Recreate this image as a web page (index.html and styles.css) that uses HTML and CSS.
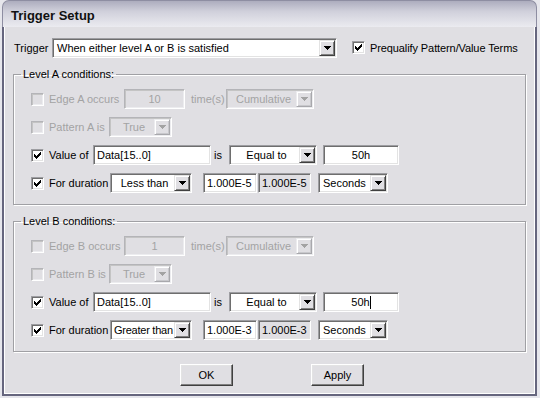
FILE: index.html
```html
<!DOCTYPE html>
<html>
<head>
<meta charset="utf-8">
<title>Trigger Setup</title>
<link rel="stylesheet" href="styles.css">
</head>
<body>
<div class="window">
  <div class="titlebar">Trigger Setup</div>
  <div class="frame">
    <div class="trigger-row">
      <span class="lbl lbl-trigger">Trigger</span>
      <div class="select sel-trigger"><span class="val left">When either level A or B is satisfied</span><span class="arrow"><svg width="7" height="4" viewBox="0 0 7 4" shape-rendering="crispEdges"><rect x="0" y="0" width="7" height="1"/><rect x="1" y="1" width="5" height="1"/><rect x="2" y="2" width="3" height="1"/><rect x="3" y="3" width="1" height="1"/></svg></span></div>
      <span class="check checked pq"><svg width="7" height="7" viewBox="0 0 7 7" shape-rendering="crispEdges"><rect x="0" y="2" width="1" height="3"/><rect x="1" y="3" width="1" height="3"/><rect x="2" y="4" width="1" height="3"/><rect x="3" y="3" width="1" height="3"/><rect x="4" y="2" width="1" height="3"/><rect x="5" y="1" width="1" height="3"/><rect x="6" y="0" width="1" height="3"/></svg></span>
      <span class="lbl pq-label">Prequalify Pattern/Value Terms</span>
    </div>

    <fieldset class="group">
      <legend>Level A conditions:</legend>
      <div class="row off">
        <span class="check"></span>
        <span class="lbl w-edge">Edge A occurs</span>
        <span class="field w-count center">10</span>
        <span class="lbl w-times">time(s)</span>
        <div class="select w-cumul"><span class="val center">Cumulative</span><span class="arrow"><svg width="7" height="4" viewBox="0 0 7 4" shape-rendering="crispEdges"><rect x="0" y="0" width="7" height="1"/><rect x="1" y="1" width="5" height="1"/><rect x="2" y="2" width="3" height="1"/><rect x="3" y="3" width="1" height="1"/></svg></span></div>
      </div>
      <div class="row off">
        <span class="check"></span>
        <span class="lbl w-pattern">Pattern A is</span>
        <div class="select w-true"><span class="val center">True</span><span class="arrow"><svg width="7" height="4" viewBox="0 0 7 4" shape-rendering="crispEdges"><rect x="0" y="0" width="7" height="1"/><rect x="1" y="1" width="5" height="1"/><rect x="2" y="2" width="3" height="1"/><rect x="3" y="3" width="1" height="1"/></svg></span></div>
      </div>
      <div class="row">
        <span class="check checked"><svg width="7" height="7" viewBox="0 0 7 7" shape-rendering="crispEdges"><rect x="0" y="2" width="1" height="3"/><rect x="1" y="3" width="1" height="3"/><rect x="2" y="4" width="1" height="3"/><rect x="3" y="3" width="1" height="3"/><rect x="4" y="2" width="1" height="3"/><rect x="5" y="1" width="1" height="3"/><rect x="6" y="0" width="1" height="3"/></svg></span>
        <span class="lbl w-value">Value of</span>
        <span class="field w-data">Data[15..0]</span>
        <span class="lbl w-is">is</span>
        <div class="select w-equal"><span class="val center">Equal to</span><span class="arrow"><svg width="7" height="4" viewBox="0 0 7 4" shape-rendering="crispEdges"><rect x="0" y="0" width="7" height="1"/><rect x="1" y="1" width="5" height="1"/><rect x="2" y="2" width="3" height="1"/><rect x="3" y="3" width="1" height="1"/></svg></span></div>
        <span class="field w-hex center">50h</span>
      </div>
      <div class="row">
        <span class="check checked"><svg width="7" height="7" viewBox="0 0 7 7" shape-rendering="crispEdges"><rect x="0" y="2" width="1" height="3"/><rect x="1" y="3" width="1" height="3"/><rect x="2" y="4" width="1" height="3"/><rect x="3" y="3" width="1" height="3"/><rect x="4" y="2" width="1" height="3"/><rect x="5" y="1" width="1" height="3"/><rect x="6" y="0" width="1" height="3"/></svg></span>
        <span class="lbl w-dur">For duration</span>
        <div class="select w-cmp"><span class="val center">Less than</span><span class="arrow"><svg width="7" height="4" viewBox="0 0 7 4" shape-rendering="crispEdges"><rect x="0" y="0" width="7" height="1"/><rect x="1" y="1" width="5" height="1"/><rect x="2" y="2" width="3" height="1"/><rect x="3" y="3" width="1" height="1"/></svg></span></div>
        <span class="field w-time">1.000E-5</span>
        <span class="field w-time2 ro">1.000E-5</span>
        <div class="select w-unit"><span class="val left">Seconds</span><span class="arrow"><svg width="7" height="4" viewBox="0 0 7 4" shape-rendering="crispEdges"><rect x="0" y="0" width="7" height="1"/><rect x="1" y="1" width="5" height="1"/><rect x="2" y="2" width="3" height="1"/><rect x="3" y="3" width="1" height="1"/></svg></span></div>
      </div>
    </fieldset>

    <fieldset class="group group-b">
      <legend>Level B conditions:</legend>
      <div class="row off">
        <span class="check"></span>
        <span class="lbl w-edge">Edge B occurs</span>
        <span class="field w-count center">1</span>
        <span class="lbl w-times">time(s)</span>
        <div class="select w-cumul"><span class="val center">Cumulative</span><span class="arrow"><svg width="7" height="4" viewBox="0 0 7 4" shape-rendering="crispEdges"><rect x="0" y="0" width="7" height="1"/><rect x="1" y="1" width="5" height="1"/><rect x="2" y="2" width="3" height="1"/><rect x="3" y="3" width="1" height="1"/></svg></span></div>
      </div>
      <div class="row off">
        <span class="check"></span>
        <span class="lbl w-pattern">Pattern B is</span>
        <div class="select w-true"><span class="val center">True</span><span class="arrow"><svg width="7" height="4" viewBox="0 0 7 4" shape-rendering="crispEdges"><rect x="0" y="0" width="7" height="1"/><rect x="1" y="1" width="5" height="1"/><rect x="2" y="2" width="3" height="1"/><rect x="3" y="3" width="1" height="1"/></svg></span></div>
      </div>
      <div class="row">
        <span class="check checked"><svg width="7" height="7" viewBox="0 0 7 7" shape-rendering="crispEdges"><rect x="0" y="2" width="1" height="3"/><rect x="1" y="3" width="1" height="3"/><rect x="2" y="4" width="1" height="3"/><rect x="3" y="3" width="1" height="3"/><rect x="4" y="2" width="1" height="3"/><rect x="5" y="1" width="1" height="3"/><rect x="6" y="0" width="1" height="3"/></svg></span>
        <span class="lbl w-value">Value of</span>
        <span class="field w-data">Data[15..0]</span>
        <span class="lbl w-is">is</span>
        <div class="select w-equal"><span class="val center">Equal to</span><span class="arrow"><svg width="7" height="4" viewBox="0 0 7 4" shape-rendering="crispEdges"><rect x="0" y="0" width="7" height="1"/><rect x="1" y="1" width="5" height="1"/><rect x="2" y="2" width="3" height="1"/><rect x="3" y="3" width="1" height="1"/></svg></span></div>
        <span class="field w-hex center">50h<span class="caret"></span></span>
      </div>
      <div class="row">
        <span class="check checked"><svg width="7" height="7" viewBox="0 0 7 7" shape-rendering="crispEdges"><rect x="0" y="2" width="1" height="3"/><rect x="1" y="3" width="1" height="3"/><rect x="2" y="4" width="1" height="3"/><rect x="3" y="3" width="1" height="3"/><rect x="4" y="2" width="1" height="3"/><rect x="5" y="1" width="1" height="3"/><rect x="6" y="0" width="1" height="3"/></svg></span>
        <span class="lbl w-dur">For duration</span>
        <div class="select w-cmp"><span class="val left tight">Greater than</span><span class="arrow"><svg width="7" height="4" viewBox="0 0 7 4" shape-rendering="crispEdges"><rect x="0" y="0" width="7" height="1"/><rect x="1" y="1" width="5" height="1"/><rect x="2" y="2" width="3" height="1"/><rect x="3" y="3" width="1" height="1"/></svg></span></div>
        <span class="field w-time">1.000E-3</span>
        <span class="field w-time2 ro">1.000E-3</span>
        <div class="select w-unit"><span class="val left">Seconds</span><span class="arrow"><svg width="7" height="4" viewBox="0 0 7 4" shape-rendering="crispEdges"><rect x="0" y="0" width="7" height="1"/><rect x="1" y="1" width="5" height="1"/><rect x="2" y="2" width="3" height="1"/><rect x="3" y="3" width="1" height="1"/></svg></span></div>
      </div>
    </fieldset>

    <div class="buttons">
      <button class="btn">OK</button>
      <button class="btn">Apply</button>
    </div>
  </div>
</div>
</body>
</html>
```
FILE: styles.css
```css
html, body {
  margin: 0;
  padding: 0;
}
body {
  background: #e6e6ec;
  font-family: "Liberation Sans", Arial, sans-serif;
  font-size: 11px;
  color: #000;
}
.window {
  margin-left: 2px;
  width: 535px;
  height: 396px;
  display: flex;
  flex-direction: column;
}
.titlebar {
  height: 27px;
  box-sizing: border-box;
  border: 1px solid #8e8ea2;
  border-bottom: none;
  border-radius: 7px 7px 0 0;
  background: linear-gradient(#adadbe, #d0d0db 40%, #ebebf0);
  padding-left: 8px;
  font-weight: bold;
  font-size: 13px;
  line-height: 29px;
  color: #111;
}
.frame {
  flex: 1;
  background: #e0dfe3;
  border: 2px solid #66667e;
  border-top: none;
  box-shadow: inset 1px 0 #fff, inset -1px -1px #fff;
  padding: 10px 9px 0 9px;
}
.trigger-row {
  display: flex;
  align-items: center;
  height: 21px;
  padding-left: 1px;
}
.lbl {
  white-space: nowrap;
  flex: none;
}
.lbl-trigger { width: 38px; }
.sel-trigger { width: 285px; height: 21px; }
.pq { margin-left: 15px; }
.pq-label { margin-left: 5px; letter-spacing: -0.1px; }

.group {
  margin: 10px 0 0 0;
  padding: 8px 10px 11px 7px;
  border: 1px solid #a0a0a4;
  box-shadow: 1px 1px 0 #fff, inset 1px 1px 0 #fff;
  min-width: 0;
}
.group legend {
  padding: 0 2px;
  line-height: 13px;
}
.row {
  display: flex;
  align-items: center;
  height: 20px;
  padding-left: 10px;
}
.row + .row { margin-top: 8px; }
.row .check + .lbl { margin-left: 5px; }
.row.off .lbl { color: #a3a3a3; }

.w-edge { width: 75px; }
.w-pattern { width: 60px; }
.w-value { width: 44px; }
.w-dur { width: 61px; }
.w-times { margin-left: 6px; width: 35px; }
.w-is { margin-left: 3px; width: 15px; }

.check {
  flex: none;
  width: 13px;
  height: 13px;
  box-sizing: border-box;
  background: #fff;
  border: 1px solid;
  border-color: #9d9da1 #fff #fff #9d9da1;
  box-shadow: inset 1px 1px #6e6e6e, inset -1px -1px #e3e3e3;
  display: flex;
  align-items: center;
  justify-content: center;
}
.check svg { display: block; fill: #000; }
.row.off .check {
  background: #e0dfe3;
  border-color: #b4b4b8 #fff #fff #b4b4b8;
  box-shadow: inset 1px 1px #c4c4c4, inset -1px -1px #ececef;
}

.field {
  flex: none;
  box-sizing: border-box;
  height: 20px;
  background: #fff;
  border: 1px solid;
  border-color: #9d9da1 #fff #fff #9d9da1;
  box-shadow: inset 1px 1px #6e6e6e, inset -1px -1px #e3e3e3;
  padding: 0 3px;
  line-height: 18px;
  white-space: nowrap;
  overflow: hidden;
}
.field.center { text-align: center; }
.field.ro { background: #e0dfe3; }
.row.off .field {
  background: #e0dfe3;
  color: #a3a3a3;
  border-color: #b4b4b8 #fff #fff #b4b4b8;
  box-shadow: inset 1px 1px #c4c4c4, inset -1px -1px #ececef;
}
.caret {
  display: inline-block;
  width: 1px;
  height: 13px;
  background: #000;
  vertical-align: -3px;
}

.select {
  flex: none;
  display: flex;
  box-sizing: border-box;
  height: 20px;
  background: #fff;
  border: 1px solid;
  border-color: #9d9da1 #fff #fff #9d9da1;
  box-shadow: inset 1px 1px #6e6e6e, inset -1px -1px #e3e3e3;
  padding: 1px;
}
.select .val {
  flex: 1;
  min-width: 0;
  white-space: nowrap;
  overflow: hidden;
  line-height: 16px;
  padding-left: 3px;
}
.select .val.tight {
  padding-left: 2px;
  letter-spacing: -0.25px;
}
.sel-trigger .val { line-height: 17px; }
.select .val.center { text-align: center; }
.arrow {
  flex: none;
  width: 16px;
  box-sizing: border-box;
  background: #e0dfe3;
  border: 1px solid;
  border-color: #e3e3e3 #404040 #404040 #e3e3e3;
  box-shadow: inset 1px 1px #fff, inset -1px -1px #808080;
  display: flex;
  align-items: center;
  justify-content: center;
}
.arrow svg { display: block; fill: #000; }
.row.off .select {
  background: #e0dfe3;
  color: #a3a3a3;
  border-color: #b4b4b8 #fff #fff #b4b4b8;
  box-shadow: inset 1px 1px #c4c4c4, inset -1px -1px #ececef;
}
.row.off .arrow {
  border-color: #ececef #a8a8ac #a8a8ac #ececef;
  box-shadow: inset 1px 1px #fff, inset -1px -1px #c8c8cc;
}
.row.off .arrow svg { fill: #a3a3a3; }

.w-count { width: 61px; }
.w-cumul { width: 88px; }
.w-true { width: 63px; }
.w-data { width: 118px; }
.w-equal { width: 88px; }
.w-hex { width: 76px; margin-left: 6px; }
.w-cmp { width: 82px; }
.w-time { width: 54px; margin-left: 11px; }
.w-time2 { width: 53px; margin-left: 1px; }
.w-unit { width: 70px; margin-left: 7px; }

.group-b { margin-top: 10px; }

.buttons {
  display: flex;
  justify-content: center;
  gap: 78px;
  margin-top: 12px;
  padding-left: 5px;
}
.btn {
  width: 53px;
  height: 22px;
  box-sizing: border-box;
  font-family: "Liberation Sans", Arial, sans-serif;
  font-size: 11px;
  color: #000;
  background: #e0dfe3;
  border: 1px solid;
  border-color: #fff #404040 #404040 #fff;
  box-shadow: inset -1px -1px #808080, inset 1px 1px #e3e3e3;
  padding: 0;
  border-radius: 0;
}
```
